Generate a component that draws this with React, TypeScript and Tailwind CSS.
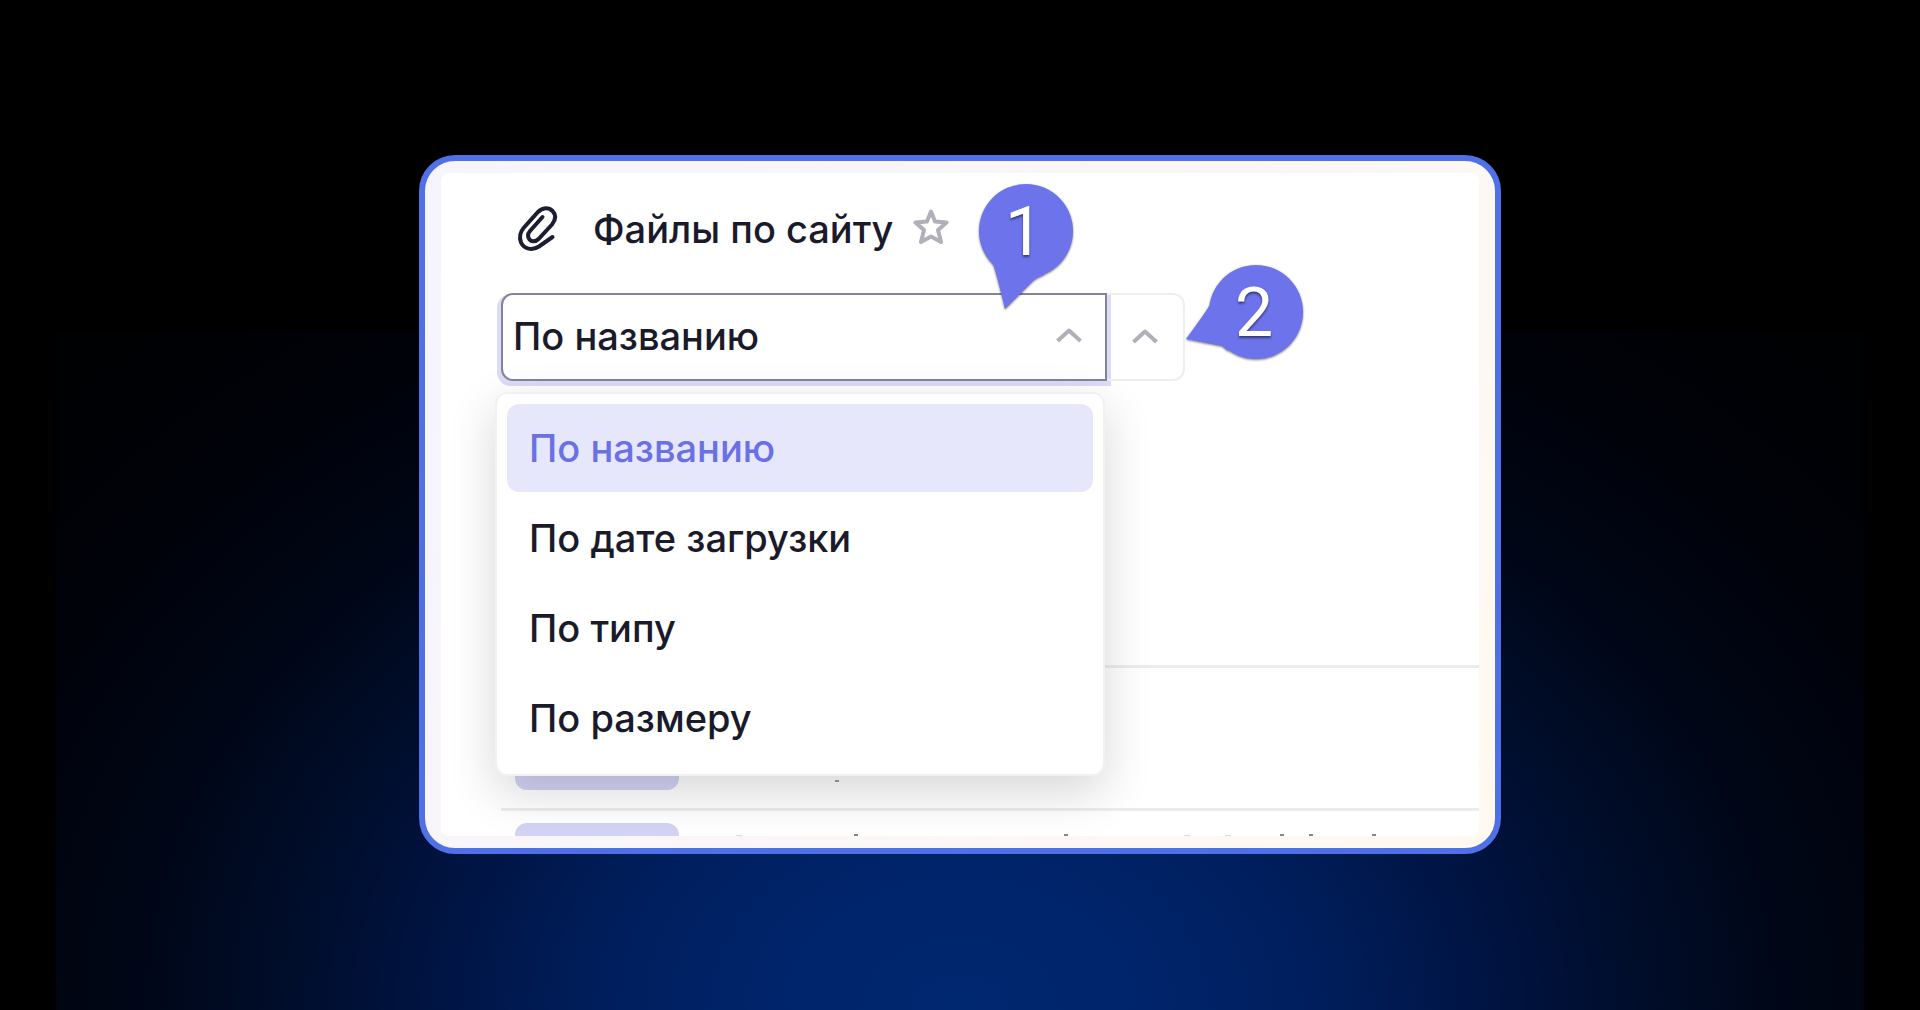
import React, { useState } from "react";

const options = ["По названию", "По дате загрузки", "По типу", "По размеру"];

const Chevron: React.FC = () => (
  <svg className="h-4 w-7 shrink-0" viewBox="0 0 28 16" fill="none" stroke="#b0b0bb" strokeWidth="4" aria-hidden="true">
    <path d="M2.500 13 L14 2.500 L25.500 13" strokeLinejoin="round" />
  </svg>
);

const PaperclipIcon: React.FC = () => (
  <svg className="h-12 w-12 shrink-0" viewBox="0 0 48 48" fill="none" stroke="#1d1d31" strokeWidth="4" strokeLinecap="round" aria-hidden="true">
    <path d="M39.500 32 L26 41.500 C19 46 11 44 8 37.500 C6 32 7 27 11 22.500 L25 7 C29.500 2.500 35.500 2 39.500 6 C43.500 10 42.500 15 39 19.500 L25.500 34 C22.500 37 18.500 37 16.500 34.500 C14.500 32 14.500 29 17 26 L29.500 12" />
  </svg>
);

const StarIcon: React.FC = () => (
  <svg className="h-10 w-9" viewBox="0 0 36 40" fill="none" stroke="#b0b0bb" strokeWidth="4" strokeLinejoin="round" aria-hidden="true">
    <path d="M18 2.500 L22 12.500 L33.500 13.500 L25 21 L28 33 L18 27.500 L8 33 L11 21 L2.500 13.500 L14 12.500 Z" />
  </svg>
);

type PinProps = {
  className: string;
  label: string;
  cx: number;
  cy: number;
  tail: string;
};

const Pin: React.FC<PinProps> = ({ className, label, cx, cy, tail }) => (
  <svg className={className} width="130" height="135" viewBox="0 0 130 135">
    <g fill="#6d73ea" className="drop-shadow-[0_1px_1px_rgba(0,0,0,0.5)]">
      <circle cx={cx} cy={cy} r="47" />
      <path d={tail} />
    </g>
    <text
      x={cx - 2}
      y={cy + 24}
      textAnchor="middle"
      fill="#ffffff"
      className="font-[Roboto,sans-serif] text-[68px] font-normal drop-shadow-[0_2px_1px_rgba(0,0,0,0.5)]"
    >
      {label}
    </text>
  </svg>
);

const App: React.FC = () => {
  const [selected, setSelected] = useState(options[0]);

  return (
    <main className="relative isolate flex min-h-screen flex-col items-center overflow-hidden bg-black pt-[155px] font-[Inter,sans-serif]">
      <div className="absolute inset-x-14 top-[332px] bottom-0 -z-10 bg-[radial-gradient(ellipse_50%_100%_at_50%_100%,#002870_0%,#00246b_20%,#001e5c_40%,#001340_60%,#000d2a_75%,#000616_92%,#00020a_112%,#000103_135%)]" />

      <section className="relative w-full max-w-[1082px] rounded-[36px] border-6 border-[#5070e5] bg-[linear-gradient(120deg,#f6f4ff,#fff9f0)] px-4 py-3">
        <div className="relative h-[663px] overflow-hidden rounded-lg bg-white pl-[60px] text-[38px] leading-[48px] font-medium text-[#1a1a2b]">
          <header className="flex h-[120px] items-center pb-2 pl-3">
            <PaperclipIcon />
            <h1 className="ml-8">Файлы по сайту</h1>
            <button type="button" aria-label="В избранное" className="ml-5">
              <StarIcon />
            </button>
          </header>

          <div className="flex h-[88px]">
            <button
              type="button"
              aria-haspopup="listbox"
              aria-expanded="true"
              className="flex w-[606px] items-center justify-between rounded-l-xl border-2 border-[#858396] bg-white pr-[22px] pb-[2px] pl-[10px] shadow-[-2px_3px_0_2px_#dcdbf8,2px_3px_0_2px_#dcdbf8]"
            >
              {selected}
              <Chevron />
            </button>
            <button
              type="button"
              aria-label="Направление сортировки"
              className="flex w-[78px] items-center justify-center rounded-r-xl border-2 border-l-0 border-[#efeff1]"
            >
              <Chevron />
            </button>
          </div>

          {/* file rows, mostly covered by the open list */}
          <div className="pt-[284px]">
            <div className="h-[143px] border-t-3 border-[#ececee] pl-[14px]">
              <div className="h-[122px] w-[164px] rounded-xl bg-[#d3d4f4]" />
            </div>
            <div className="border-t-3 border-[#ececee] pt-3 pl-[14px]">
              <div className="h-[122px] w-[164px] rounded-xl bg-[#d3d4f4]" />
            </div>
          </div>

          {/* tips of the file names cut off by the bottom edge */}
          <svg className="absolute bottom-0 left-0" width="1040" height="60" viewBox="0 0 1040 60" aria-hidden="true">
            <path d="M394 4h4v2h-4z" fill="#9a9aa8" />
            <path d="M413 60v-2h4v2z M623 60v-2h4v2z M839 60v-2h4v2z M868 60v-2h4v2z M931 60v-2h4v2z" fill="#85858f" />
            <path d="M295 60v-1h6v1z M743 60v-1h6v1z M784 60v-1h6v1z" fill="#dcdce0" />
          </svg>

          <ul
            role="listbox"
            className="absolute top-[219px] left-[54px] flex w-[610px] flex-col gap-[2px] rounded-xl border-2 border-[#f1f1f2] bg-white px-[10px] pt-[10px] pb-3 shadow-[0_16px_48px_rgba(0,0,0,0.16)]"
          >
            {options.map((option) => (
              <li key={option} role="option" aria-selected={option === selected}>
                <button
                  type="button"
                  onClick={() => setSelected(option)}
                  className={
                    option === selected
                      ? "block h-[88px] w-full rounded-xl bg-[#e6e7fa] px-[22px] text-left text-[#6a70e6]"
                      : "block h-[88px] w-full rounded-xl px-[22px] text-left"
                  }
                >
                  {option}
                </button>
              </li>
            ))}
          </ul>

          <Pin className="absolute top-[7px] left-[533px]" label="1" cx={52} cy={51} tail="M19 84 Q22 92 31 129 L58 102 Q62 98 70 95 L52 51 Z" />
          <Pin className="absolute top-[87px] left-[741px]" label="2" cx={74} cy={52} tail="M27 46 Q26 49 4 79 L40 86 L46 91 L74 52 Z" />
        </div>
      </section>
    </main>
  );
};

export default App;
